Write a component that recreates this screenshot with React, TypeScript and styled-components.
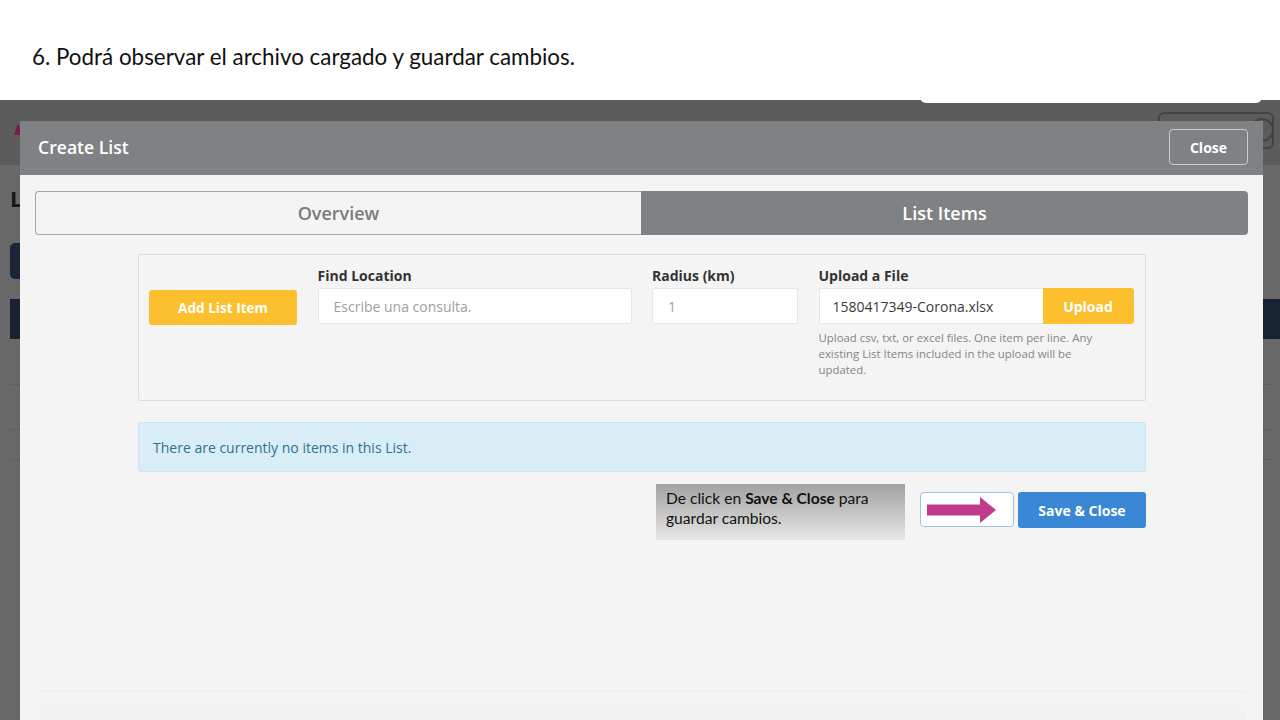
import React from "react";
import styled, { createGlobalStyle } from "styled-components";

const Global = createGlobalStyle`
  html, body { margin: 0; padding: 0; background: #ffffff; }
  body { width: 1280px; height: 720px; overflow: hidden; }
  * { box-sizing: border-box; }
`;

const Page = styled.div`
  width: 1280px;
  height: 720px;
  display: flex;
  flex-direction: column;
  overflow: hidden;
`;

const CaptionBar = styled.div`
  height: 100px;
  flex: none;
  padding: 43px 0 0 32px;
  font-family: "Lato", "Liberation Sans", sans-serif;
  font-size: 22.4px;
  color: #111;
  position: relative;
`;

const Stage = styled.div`
  position: relative;
  flex: 1;
  background: #686868;
  overflow: hidden;
`;

/* ---------- background application (dimmed) ---------- */
const BgHeader = styled.div`
  height: 65px;
  background: #5c5c5c;
  display: flex;
  align-items: center;
  justify-content: space-between;
  padding: 0 6px 0 14px;
`;

const BgLogo = styled.div`
  width: 0;
  height: 0;
  border-left: 4px solid transparent;
  border-right: 4px solid transparent;
  border-bottom: 12px solid #7a1b52;
  margin-top: -8px;
`;

const BgSearch = styled.div`
  width: 116px;
  height: 37px;
  margin-top: -4px;
  border: 2px solid #444;
  border-radius: 6px;
  position: relative;
  &::after {
    content: "";
    position: absolute;
    right: -2px;
    top: 4px;
    width: 20px;
    height: 20px;
    border-radius: 50%;
    border: 2px solid #444;
  }
`;

const BgWhiteTab = styled.div`
  position: absolute;
  left: 920px;
  top: -3px;
  width: 342px;
  height: 6px;
  background: #ffffff;
  border-radius: 0 0 6px 6px;
`;

const BgContent = styled.div`
  padding: 18px 6px 0 10px;
  display: flex;
  flex-direction: column;
`;

const BgTitle = styled.div`
  font-family: "Open Sans", sans-serif;
  font-weight: 700;
  font-size: 22px;
  color: #161616;
  height: 42px;
`;

const BgButton = styled.div`
  margin-top: 18px;
  width: 120px;
  height: 36px;
  background: #1a2535;
  border-radius: 5px;
`;

const BgTableHead = styled.div`
  margin-top: 20px;
  height: 40px;
  background: #172233;
  margin-right: -6px;
`;

const BgRow = styled.div<{ h: number }>`
  height: ${(p) => p.h}px;
  border-bottom: 1px solid #5e5e5e;
`;

/* ---------- modal ---------- */
const Modal = styled.div`
  position: absolute;
  left: 20px;
  top: 21px;
  width: 1243px;
  height: 610px;
  background: #f4f4f4;
  display: flex;
  flex-direction: column;
  font-family: "Open Sans", "Liberation Sans", sans-serif;
`;

const ModalHeader = styled.div`
  height: 54px;
  flex: none;
  background: #7e8285;
  display: flex;
  align-items: center;
  justify-content: space-between;
  padding: 0 15px 0 18px;
`;

const ModalTitle = styled.div`
  color: #ffffff;
  font-size: 17.6px;
  font-weight: 600;
  margin-top: -3px;
`;

const CloseButton = styled.button`
  width: 79px;
  height: 36px;
  margin-top: -2px;
  background: transparent;
  border: 1px solid #c9cbcd;
  border-radius: 4px;
  color: #ffffff;
  font-family: "Open Sans", sans-serif;
  font-weight: 700;
  font-size: 14px;
  padding: 0;
`;

const ModalBody = styled.div`
  flex: 1;
  padding: 16px 15px 0;
  display: flex;
  flex-direction: column;
`;

const Tabs = styled.div`
  display: grid;
  grid-template-columns: 606px 1fr;
  height: 44px;
`;

const Tab = styled.div<{ active?: boolean }>`
  display: flex;
  align-items: center;
  justify-content: center;
  font-size: 18px;
  font-weight: 600;
  color: ${(p) => (p.active ? "#ffffff" : "#7a7a7a")};
  background: ${(p) => (p.active ? "#7e8285" : "#f4f4f4")};
  border: ${(p) => (p.active ? "none" : "1px solid #a7a7a7")};
  border-radius: ${(p) => (p.active ? "0 4px 4px 0" : "4px 0 0 4px")};
  border-right: none;
`;

const Container = styled.div`
  width: 1008px;
  align-self: center;
  margin-left: 1px;
  display: flex;
  flex-direction: column;
`;

const Panel = styled.div`
  margin-top: 19px;
  height: 147px;
  border: 1px solid #dcdcdc;
  border-radius: 2px;
  background: #f4f4f4;
  padding: 11px 11px 0 10px;
  display: grid;
  grid-template-columns: 148px 314px 146px 315px;
  column-gap: 20.5px;
  align-items: start;
`;

const Field = styled.div`
  display: flex;
  flex-direction: column;
`;

const Label = styled.div`
  font-size: 14px;
  font-weight: 700;
  color: #333;
  height: 22px;
  line-height: 19px;
`;

const YellowButton = styled.button`
  background: #fcc02e;
  border: none;
  color: #ffffff;
  font-family: "Open Sans", sans-serif;
  font-weight: 700;
  font-size: 14px;
  height: 35px;
  border-radius: 3px;
  padding: 0;
`;

const AddButton = styled(YellowButton)`
  margin-top: 24px;
  width: 148px;
  font-size: 13.6px;
`;

const Input = styled.div<{ muted?: boolean }>`
  height: 36px;
  background: #ffffff;
  border: 1px solid #e6e6e6;
  border-radius: 2px;
  display: flex;
  align-items: center;
  padding: 0 15px;
  font-size: 14px;
  color: ${(p) => (p.muted ? "#a0a0a0" : "#555")};
`;

const UploadRow = styled.div`
  display: flex;
  height: 36px;
`;

const FileInput = styled(Input)`
  flex: 1;
  border-right: none;
  border-radius: 2px 0 0 2px;
  font-size: 14px;
  color: #3a3a3a;
  padding-left: 13px;
`;

const UploadButton = styled(YellowButton)`
  width: 91px;
  height: 36px;
  border-radius: 0 3px 3px 0;
`;

const HelpText = styled.div`
  margin-top: 6px;
  font-size: 11.4px;
  line-height: 16px;
  color: #858585;
  width: 300px;
`;

const Alert = styled.div`
  margin-top: 21px;
  height: 50px;
  background: #d9edf7;
  border: 1px solid #c6e6f3;
  border-radius: 3px;
  color: #31708f;
  font-size: 14px;
  display: flex;
  align-items: center;
  padding-left: 14px;
`;

const ActionRow = styled.div`
  margin-top: 12px;
  display: flex;
  justify-content: flex-end;
  align-items: flex-start;
`;

const Annotation = styled.div`
  width: 249px;
  height: 56px;
  background: linear-gradient(to bottom, #a2a2a2 0%, #c7c7c7 55%, #e6e6e6 100%);
  padding: 4px 10px;
  font-family: "Lato", "Liberation Sans", sans-serif;
  font-size: 15.6px;
  line-height: 20px;
  color: #111;
  margin-right: 15px;
  b { font-weight: 700; }
`;

const GhostButton = styled.div`
  margin-top: 8px;
  width: 94px;
  height: 35px;
  background: #ffffff;
  border: 1.5px solid #a0bfe4;
  border-radius: 4px;
  display: flex;
  align-items: center;
  padding-left: 6px;
  margin-right: 4px;
`;

const SaveButton = styled.button`
  margin-top: 8px;
  width: 128px;
  height: 36px;
  background: #3a87d6;
  border: none;
  border-radius: 3px;
  color: #ffffff;
  font-family: "Open Sans", sans-serif;
  font-weight: 700;
  font-size: 14px;
  padding: 0;
`;

const ModalFooterLine = styled.div`
  margin-top: auto;
  height: 40px;
  border-top: 1px solid #ececec;
  background: linear-gradient(to bottom, #f4f4f4, #f0f0f0);
  margin-left: 5px;
  margin-right: 2px;
`;

const Arrow = () => (
  <svg width="70" height="28" viewBox="0 0 70 28">
    <polygon points="0,8.5 53,8.5 53,1 69,14 53,27 53,19.5 0,19.5" fill="#c23a8c" />
  </svg>
);

export default function App() {
  return (
    <Page>
      <Global />
      <CaptionBar>6. Podrá observar el archivo cargado y guardar cambios.</CaptionBar>
      <Stage>
        <BgWhiteTab />
        <BgHeader>
          <BgLogo />
          <BgSearch />
        </BgHeader>
        <BgContent>
          <BgTitle>Lists</BgTitle>
          <BgButton />
          <BgTableHead />
          <BgRow h={46} />
          <BgRow h={45} />
          <BgRow h={30} />
        </BgContent>

        <Modal>
          <ModalHeader>
            <ModalTitle>Create List</ModalTitle>
            <CloseButton>Close</CloseButton>
          </ModalHeader>
          <ModalBody>
            <Tabs>
              <Tab>Overview</Tab>
              <Tab active>List Items</Tab>
            </Tabs>
            <Container>
              <Panel>
                <AddButton>Add List Item</AddButton>
                <Field>
                  <Label>Find Location</Label>
                  <Input muted>Escribe una consulta.</Input>
                </Field>
                <Field>
                  <Label>Radius (km)</Label>
                  <Input muted>1</Input>
                </Field>
                <Field>
                  <Label>Upload a File</Label>
                  <UploadRow>
                    <FileInput>1580417349-Corona.xlsx</FileInput>
                    <UploadButton>Upload</UploadButton>
                  </UploadRow>
                  <HelpText>
                    Upload csv, txt, or excel files. One item per line. Any existing List Items included in the upload will be updated.
                  </HelpText>
                </Field>
              </Panel>
              <Alert>There are currently no items in this List.</Alert>
              <ActionRow>
                <Annotation>
                  De click en <b>Save &amp; Close</b> para guardar cambios.
                </Annotation>
                <GhostButton>
                  <Arrow />
                </GhostButton>
                <SaveButton>Save &amp; Close</SaveButton>
              </ActionRow>
            </Container>
            <ModalFooterLine />
          </ModalBody>
        </Modal>
      </Stage>
    </Page>
  );
}
